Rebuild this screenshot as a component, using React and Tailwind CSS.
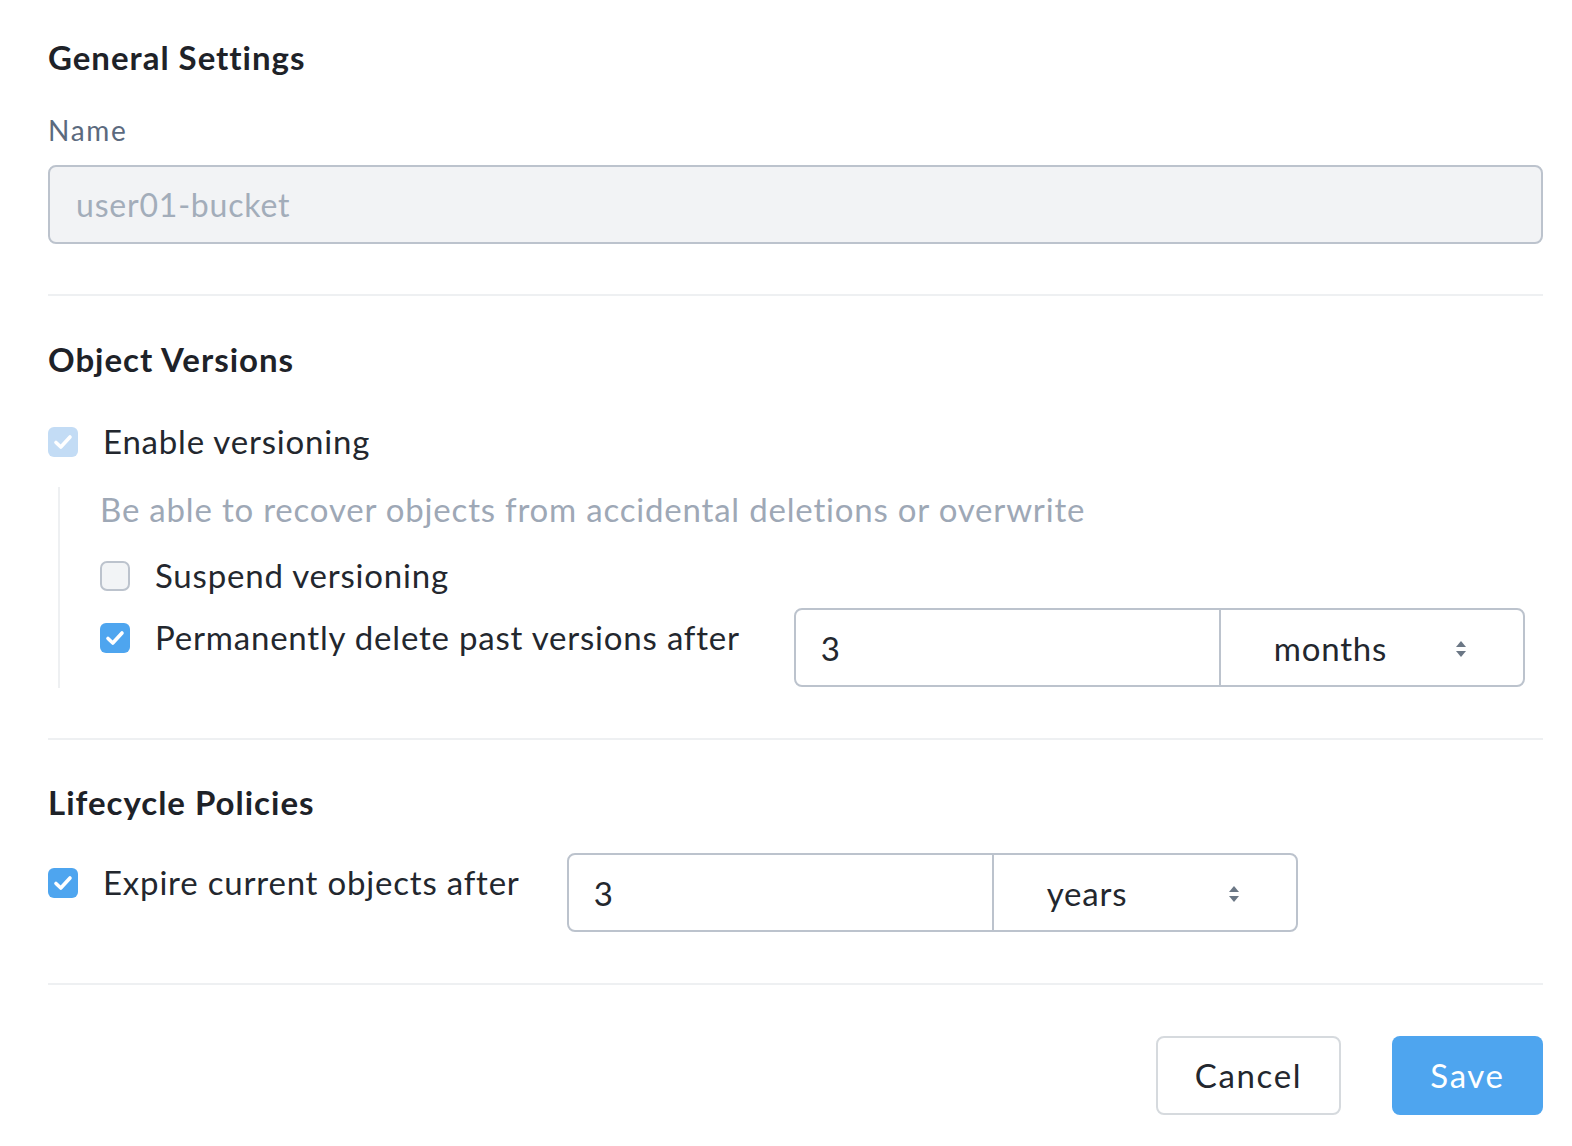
import React from "react";

const font = { fontFamily: "Lato, 'Open Sans', sans-serif" };

function Check({ state }) {
  if (state === "off") {
    return (
      <span className="w-[30px] h-[30px] shrink-0 rounded-[7px] border-2 border-[#bcc3cd] bg-[#f2f4f6]" />
    );
  }
  const bg = state === "disabled" ? "bg-[#c3dcf5]" : "bg-[#4ea5ef]";
  return (
    <span className={`w-[30px] h-[30px] shrink-0 rounded-[6px] ${bg} flex items-center justify-center`}>
      <svg width="30" height="30" viewBox="0 0 30 30" fill="none">
        <path d="M8 15.5 L12.8 20 L22 10" stroke="white" strokeWidth="3.6" strokeLinecap="round" strokeLinejoin="round" />
      </svg>
    </span>
  );
}

function Arrows() {
  return (
    <svg width="12" height="20" viewBox="0 0 12 20" className="shrink-0">
      <path d="M6 2 L11 8 L1 8 Z" fill="#6b7785" />
      <path d="M6 18 L11 12 L1 12 Z" fill="#6b7785" />
    </svg>
  );
}

function Group({ value, unit }) {
  return (
    <div className="flex w-[731px] h-[79px] shrink-0 rounded-[8px] border-2 border-[#bcc3cd] bg-white">
      <div className="w-[425px] flex items-center pl-[25px] text-[33px] text-[#23272e] border-r-2 border-[#bcc3cd] pt-[2px]">
        {value}
      </div>
      <div className="flex-1 flex items-center pl-[53px] pr-[56px] text-[33px] text-[#23272e] pt-[2px]">
        <span className="flex-1">{unit}</span>
        <Arrows />
      </div>
    </div>
  );
}

export default function App() {
  return (
    <div className="bg-white min-h-[1146px] pl-[48px] pr-[29px] pt-[37px] tracking-[0.05em]" style={font}>
      <h2 className="text-[33px] leading-[40px] font-bold text-[#1e2228] tracking-[0.03em]">General Settings</h2>
      <div className="mt-[35px] text-[28px] leading-[36px] text-[#5b6a7e] tracking-[0.06em]">Name</div>
      <div className="mt-[17px] h-[79px] rounded-[8px] border-2 border-[#bcc3cd] bg-[#f2f3f5] flex items-center pl-[26px] text-[32px] text-[#a3adba]">
        user01-bucket
      </div>

      <div className="mt-[50px] h-[2px] bg-[#eef0f2]" />

      <h2 className="mt-[43px] text-[33px] leading-[40px] font-bold text-[#1e2228] tracking-[0.03em]">Object Versions</h2>
      <div className="mt-[43px] flex items-center gap-[25px] h-[40px]">
        <Check state="disabled" />
        <span className="text-[33px] text-[#23272e]">Enable versioning</span>
      </div>
      <div className="mt-[25px] ml-[10px] border-l-2 border-[#eef0f2] pl-[40px] pt-[2px] pb-[1px]">
        <div className="text-[33px] leading-[40px] text-[#9ea8b6]">
          Be able to recover objects from accidental deletions or overwrite
        </div>
        <div className="mt-[27px] flex items-center gap-[25px] h-[40px]">
          <Check state="off" />
          <span className="text-[33px] text-[#23272e]">Suspend versioning</span>
        </div>
        <div className="mt-[12px] flex items-start gap-[54px]">
          <div className="mt-[10px] flex items-center gap-[25px] h-[40px]">
            <Check state="on" />
            <span className="text-[33px] text-[#23272e]">Permanently delete past versions after</span>
          </div>
          <Group value="3" unit="months" />
        </div>
      </div>

      <div className="mt-[50px] h-[2px] bg-[#eef0f2]" />

      <h2 className="mt-[42px] text-[33px] leading-[40px] font-bold text-[#1e2228] tracking-[0.03em]">Lifecycle Policies</h2>
      <div className="mt-[31px] flex items-start gap-[47px]">
        <div className="mt-[10px] flex items-center gap-[25px] h-[40px]">
          <Check state="on" />
          <span className="text-[33px] text-[#23272e]">Expire current objects after</span>
        </div>
        <Group value="3" unit="years" />
      </div>

      <div className="mt-[51px] h-[2px] bg-[#eef0f2]" />

      <div className="mt-[51px] flex justify-end gap-[51px]">
        <button className="w-[185px] h-[79px] rounded-[8px] border-2 border-[#d6dade] bg-white text-[33px] text-[#23272e] tracking-[0.05em]">
          Cancel
        </button>
        <button className="w-[151px] h-[79px] rounded-[8px] bg-[#4ea5ef] text-[33px] text-white tracking-[0.05em]">
          Save
        </button>
      </div>
    </div>
  );
}
